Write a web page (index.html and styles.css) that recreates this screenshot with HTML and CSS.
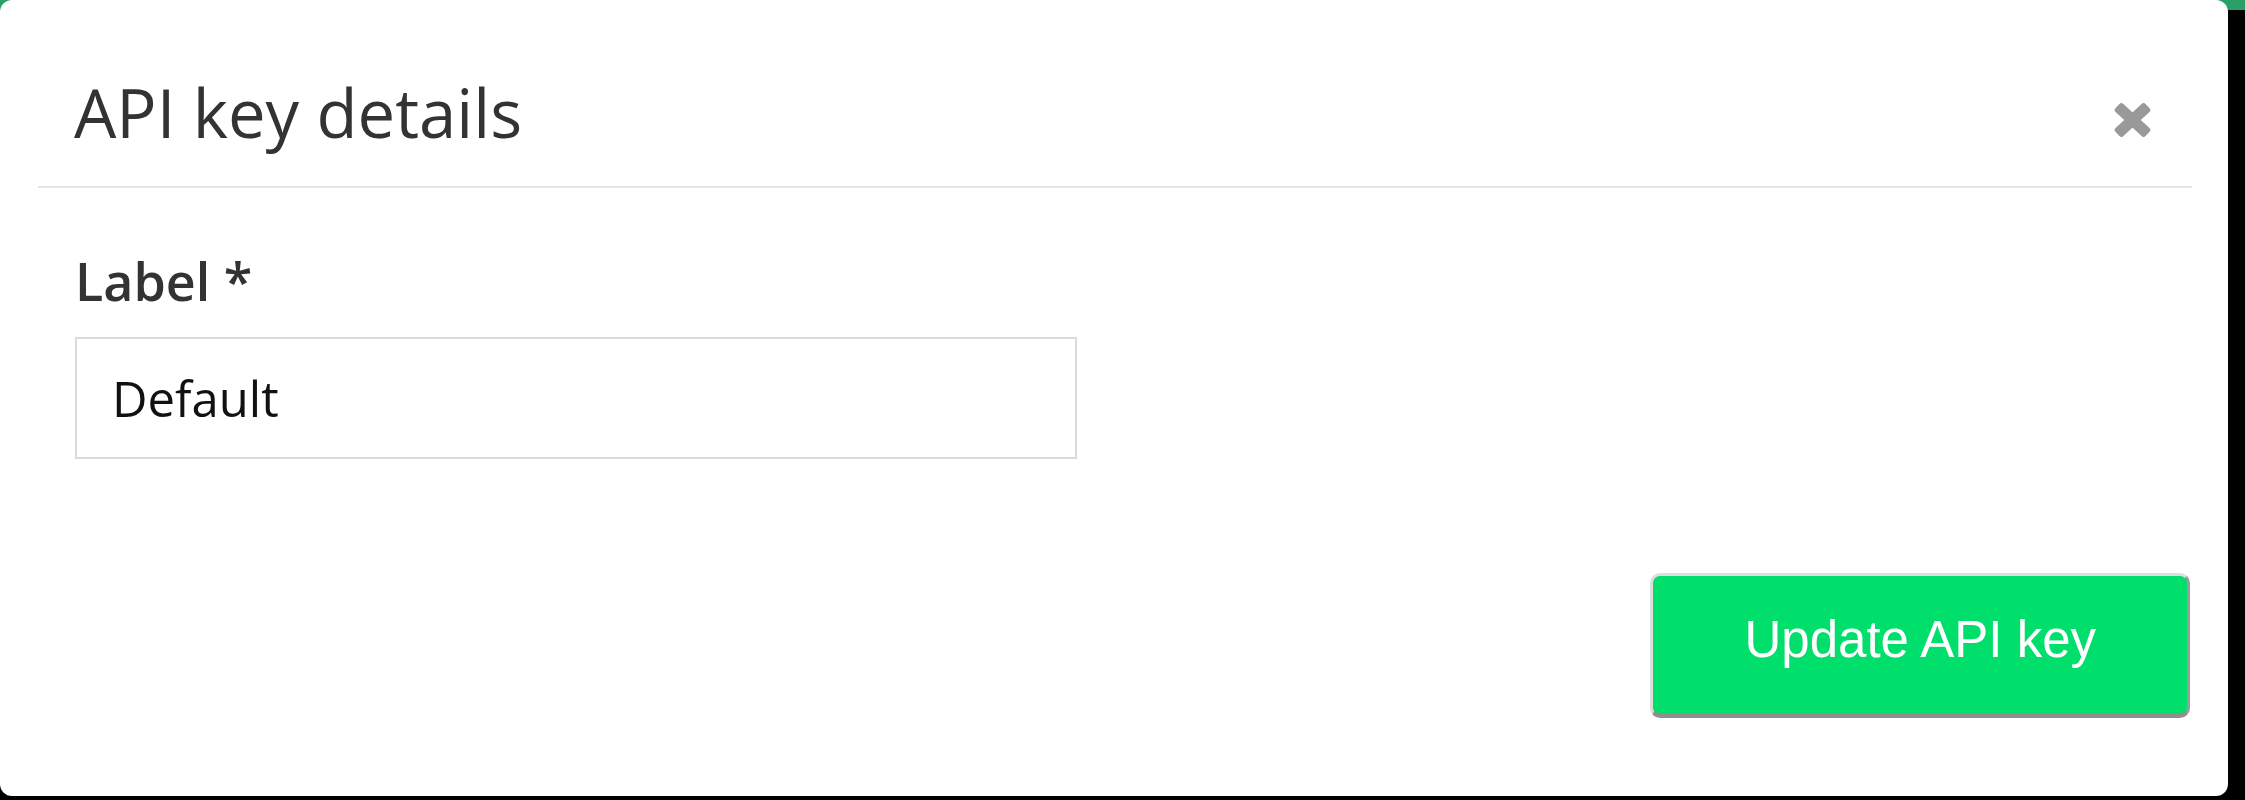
FILE: index.html
```html
<!DOCTYPE html>
<html lang="en">
<head>
<meta charset="utf-8">
<title>API key details</title>
<link rel="stylesheet" href="styles.css">
</head>
<body>
<div class="modal">
  <div class="modal-header">
    <h2 class="modal-title">API key details</h2>
    <button class="close" type="button" aria-label="Close">
      <svg width="39" height="36" viewBox="0 0 39 36" aria-hidden="true">
        <g transform="translate(19.5 18)" fill="#999999">
          <rect x="-20.5" y="-5.6" width="41" height="11.2" rx="2.6" transform="rotate(42.7)"/>
          <rect x="-20.5" y="-5.6" width="41" height="11.2" rx="2.6" transform="rotate(-42.7)"/>
        </g>
      </svg>
    </button>
  </div>
  <div class="modal-body">
    <label class="field-label" for="label">Label *</label>
    <input class="field-input" id="label" type="text" value="Default">
  </div>
  <div class="modal-footer">
    <button class="btn-primary" type="button">Update API key</button>
  </div>
</div>
</body>
</html>
```
FILE: styles.css
```css
html {
  background: linear-gradient(#2a9f66 0 10px, #000 10px);
  min-height: 100%;
}

body {
  margin: 0;
  font-family: "Open Sans", "Noto Sans", sans-serif;
}

.modal {
  width: 2228px;
  height: 796px;
  background: #ffffff;
  border-radius: 12px;
  box-sizing: border-box;
  display: flex;
  flex-direction: column;
}

.modal-header {
  margin: 0 36px 0 38px;
  padding: 79px 40px 0 36px;
  height: 188px;
  box-sizing: border-box;
  border-bottom: 2px solid #e5e5e5;
  display: flex;
  justify-content: space-between;
  align-items: flex-start;
}

.modal-title {
  margin: 0;
  font-weight: 400;
  font-size: 67px;
  line-height: 66px;
  color: #333333;
}

.close {
  margin-top: 23px;
  padding: 0;
  border: 0;
  background: none;
  width: 39px;
  height: 36px;
  display: block;
}

.close svg {
  display: block;
}

.modal-body {
  padding: 0 0 0 75px;
}

.field-label {
  display: block;
  margin-top: 67px;
  font-weight: 600;
  font-size: 52px;
  line-height: 52px;
  color: #333333;
}

.field-input {
  display: block;
  margin: 30px 0 0 0;
  width: 1002px;
  height: 122px;
  box-sizing: border-box;
  border: 2px solid #dadada;
  border-radius: 0;
  padding: 0 35px;
  font-family: "Open Sans", "Noto Sans", sans-serif;
  font-size: 49px;
  color: #111111;
  background: #ffffff;
  outline: none;
}

.modal-footer {
  display: flex;
  justify-content: flex-end;
  padding: 0 38px 0 0;
  margin-top: 114px;
}

.btn-primary {
  border: 3px solid #dedede;
  border-right-color: #9c9c9c;
  border-bottom: 5px solid #8f8f8f;
  border-radius: 10px;
  background: #00df6c;
  color: #ffffff;
  font-family: "Liberation Sans", Arial, sans-serif;
  font-size: 51px;
  line-height: 51px;
  padding: 38px 91px 48px;
  cursor: pointer;
}
```
